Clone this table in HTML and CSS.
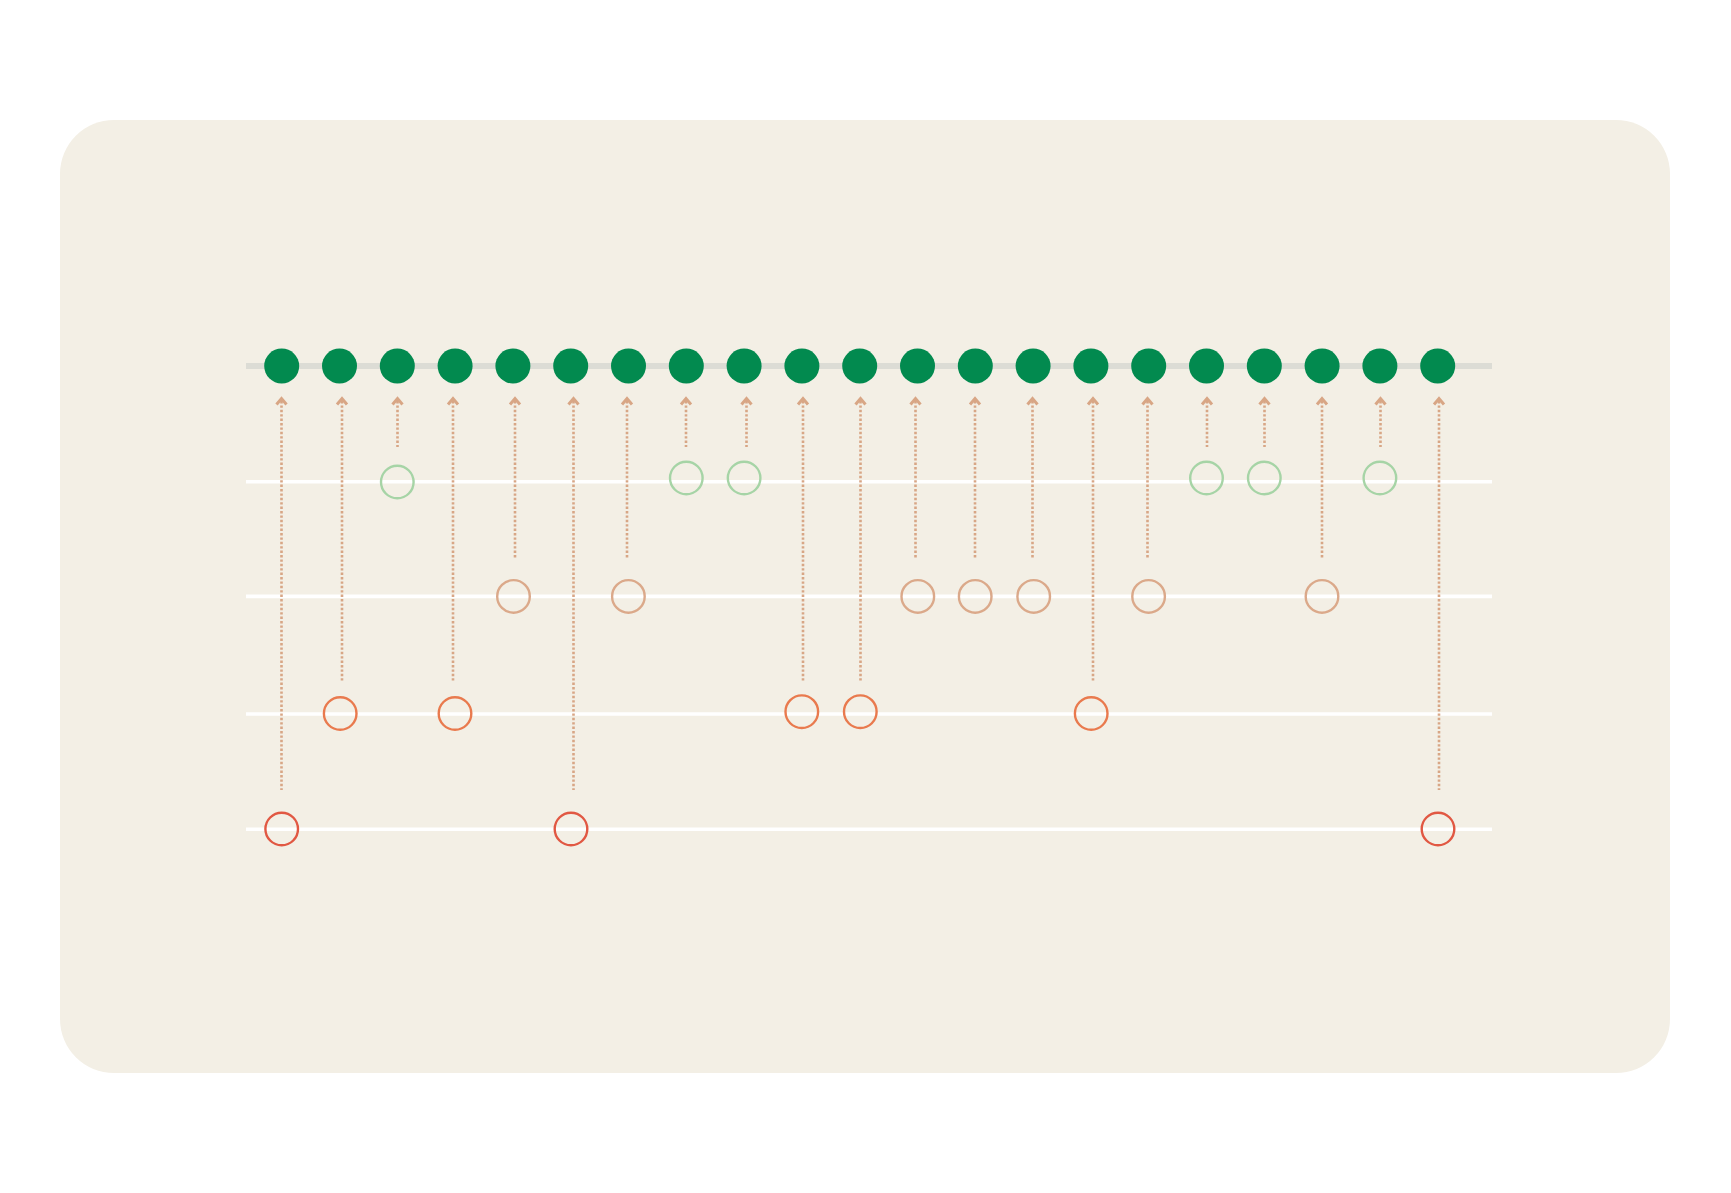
FILE: index.html
```html
<!DOCTYPE html>
<html lang="en">
<head>
<meta charset="utf-8">
<title>Chart</title>
<link rel="stylesheet" href="styles.css">
</head>
<body>
<main class="card">
<svg class="chart" width="1610" height="953" viewBox="60 120 1610 953" xmlns="http://www.w3.org/2000/svg">
  <line class="track" x1="246" y1="366" x2="1492" y2="366"/>
  <line class="rule" x1="246" y1="481.7" x2="1492" y2="481.7"/>
  <line class="rule" x1="246" y1="596.4" x2="1492" y2="596.4"/>
  <line class="rule" x1="246" y1="714" x2="1492" y2="714"/>
  <line class="rule" x1="246" y1="829.3" x2="1492" y2="829.3"/>

  <g class="dots">
    <circle cx="281.7" cy="366" r="17.5"/>
    <circle cx="339.5" cy="366" r="17.5"/>
    <circle cx="397.3" cy="366" r="17.5"/>
    <circle cx="455.1" cy="366" r="17.5"/>
    <circle cx="512.9" cy="366" r="17.5"/>
    <circle cx="570.7" cy="366" r="17.5"/>
    <circle cx="628.5" cy="366" r="17.5"/>
    <circle cx="686.3" cy="366" r="17.5"/>
    <circle cx="744.1" cy="366" r="17.5"/>
    <circle cx="801.9" cy="366" r="17.5"/>
    <circle cx="859.7" cy="366" r="17.5"/>
    <circle cx="917.5" cy="366" r="17.5"/>
    <circle cx="975.3" cy="366" r="17.5"/>
    <circle cx="1033.1" cy="366" r="17.5"/>
    <circle cx="1090.9" cy="366" r="17.5"/>
    <circle cx="1148.7" cy="366" r="17.5"/>
    <circle cx="1206.5" cy="366" r="17.5"/>
    <circle cx="1264.3" cy="366" r="17.5"/>
    <circle cx="1322.1" cy="366" r="17.5"/>
    <circle cx="1379.9" cy="366" r="17.5"/>
    <circle cx="1437.7" cy="366" r="17.5"/>
  </g>

  <g class="arrows">
    <line x1="281.5" y1="401" x2="281.5" y2="790"/><polyline points="276.5,404.5 281.5,398.5 286.5,404.5"/>
    <line x1="342" y1="401" x2="342" y2="681"/><polyline points="337,404.5 342,398.5 347,404.5"/>
    <line x1="397.5" y1="401" x2="397.5" y2="447"/><polyline points="392.5,404.5 397.5,398.5 402.5,404.5"/>
    <line x1="453" y1="401" x2="453" y2="681"/><polyline points="448,404.5 453,398.5 458,404.5"/>
    <line x1="515" y1="401" x2="515" y2="559"/><polyline points="510,404.5 515,398.5 520,404.5"/>
    <line x1="573.5" y1="401" x2="573.5" y2="790"/><polyline points="568.5,404.5 573.5,398.5 578.5,404.5"/>
    <line x1="627" y1="401" x2="627" y2="559"/><polyline points="622,404.5 627,398.5 632,404.5"/>
    <line x1="686" y1="401" x2="686" y2="447"/><polyline points="681,404.5 686,398.5 691,404.5"/>
    <line x1="746.5" y1="401" x2="746.5" y2="447"/><polyline points="741.5,404.5 746.5,398.5 751.5,404.5"/>
    <line x1="803" y1="401" x2="803" y2="681"/><polyline points="798,404.5 803,398.5 808,404.5"/>
    <line x1="860.5" y1="401" x2="860.5" y2="681"/><polyline points="855.5,404.5 860.5,398.5 865.5,404.5"/>
    <line x1="915.5" y1="401" x2="915.5" y2="559"/><polyline points="910.5,404.5 915.5,398.5 920.5,404.5"/>
    <line x1="975" y1="401" x2="975" y2="559"/><polyline points="970,404.5 975,398.5 980,404.5"/>
    <line x1="1032.5" y1="401" x2="1032.5" y2="559"/><polyline points="1027.5,404.5 1032.5,398.5 1037.5,404.5"/>
    <line x1="1093" y1="401" x2="1093" y2="681"/><polyline points="1088,404.5 1093,398.5 1098,404.5"/>
    <line x1="1147.5" y1="401" x2="1147.5" y2="559"/><polyline points="1142.5,404.5 1147.5,398.5 1152.5,404.5"/>
    <line x1="1207" y1="401" x2="1207" y2="447"/><polyline points="1202,404.5 1207,398.5 1212,404.5"/>
    <line x1="1264.5" y1="401" x2="1264.5" y2="447"/><polyline points="1259.5,404.5 1264.5,398.5 1269.5,404.5"/>
    <line x1="1322" y1="401" x2="1322" y2="559"/><polyline points="1317,404.5 1322,398.5 1327,404.5"/>
    <line x1="1380.5" y1="401" x2="1380.5" y2="447"/><polyline points="1375.5,404.5 1380.5,398.5 1385.5,404.5"/>
    <line x1="1439" y1="401" x2="1439" y2="790"/><polyline points="1434,404.5 1439,398.5 1444,404.5"/>
  </g>

  <g class="ring ring-green">
    <circle cx="397.3" cy="482" r="16.3"/>
    <circle cx="686.3" cy="478" r="16.3"/>
    <circle cx="744.1" cy="478" r="16.3"/>
    <circle cx="1206.5" cy="478" r="16.3"/>
    <circle cx="1264.3" cy="478" r="16.3"/>
    <circle cx="1379.9" cy="478" r="16.3"/>
  </g>
  <g class="ring ring-tan">
    <circle cx="513.5" cy="596.4" r="16.3"/>
    <circle cx="628.4" cy="596.4" r="16.3"/>
    <circle cx="917.8" cy="596.4" r="16.3"/>
    <circle cx="975.2" cy="596.4" r="16.3"/>
    <circle cx="1033.7" cy="596.4" r="16.3"/>
    <circle cx="1148.6" cy="596.4" r="16.3"/>
    <circle cx="1322" cy="596.4" r="16.3"/>
  </g>
  <g class="ring ring-orange">
    <circle cx="340.2" cy="713.5" r="16.3"/>
    <circle cx="455" cy="713.5" r="16.3"/>
    <circle cx="801.8" cy="711.7" r="16.3"/>
    <circle cx="860.3" cy="711.7" r="16.3"/>
    <circle cx="1091.2" cy="713.5" r="16.3"/>
  </g>
  <g class="ring ring-red">
    <circle cx="281.7" cy="829" r="16.3"/>
    <circle cx="571" cy="829" r="16.3"/>
    <circle cx="1438" cy="829" r="16.3"/>
  </g>
</svg>
</main>
</body>
</html>
```

FILE: styles.css
```css
html, body {
  margin: 0;
  padding: 0;
  background: #ffffff;
  font-family: "Liberation Sans", Arial, sans-serif;
}

body {
  padding: 120px 61px 120px 60px;
}

.card {
  width: 1610px;
  height: 953px;
  background: #f3efe5;
  border-radius: 54px;
  overflow: hidden;
}

.chart {
  display: block;
}

.track {
  stroke: #dcdcd5;
  stroke-width: 6;
}

.rule {
  stroke: #ffffff;
  stroke-width: 3.6;
}

.dots circle {
  fill: #028a4f;
}

.arrows line {
  stroke: #d8a685;
  stroke-width: 2.6;
  stroke-dasharray: 2.4 2;
}

.arrows polyline {
  fill: none;
  stroke: #d8a685;
  stroke-width: 3;
  stroke-linejoin: miter;
  stroke-linecap: butt;
}

.ring circle {
  fill: none;
  stroke-width: 2.4;
}

.ring-green circle {
  stroke: #a6d4a6;
}

.ring-tan circle {
  stroke: #dba98a;
}

.ring-orange circle {
  stroke: #e97a4e;
}

.ring-red circle {
  stroke: #e15843;
}
```
